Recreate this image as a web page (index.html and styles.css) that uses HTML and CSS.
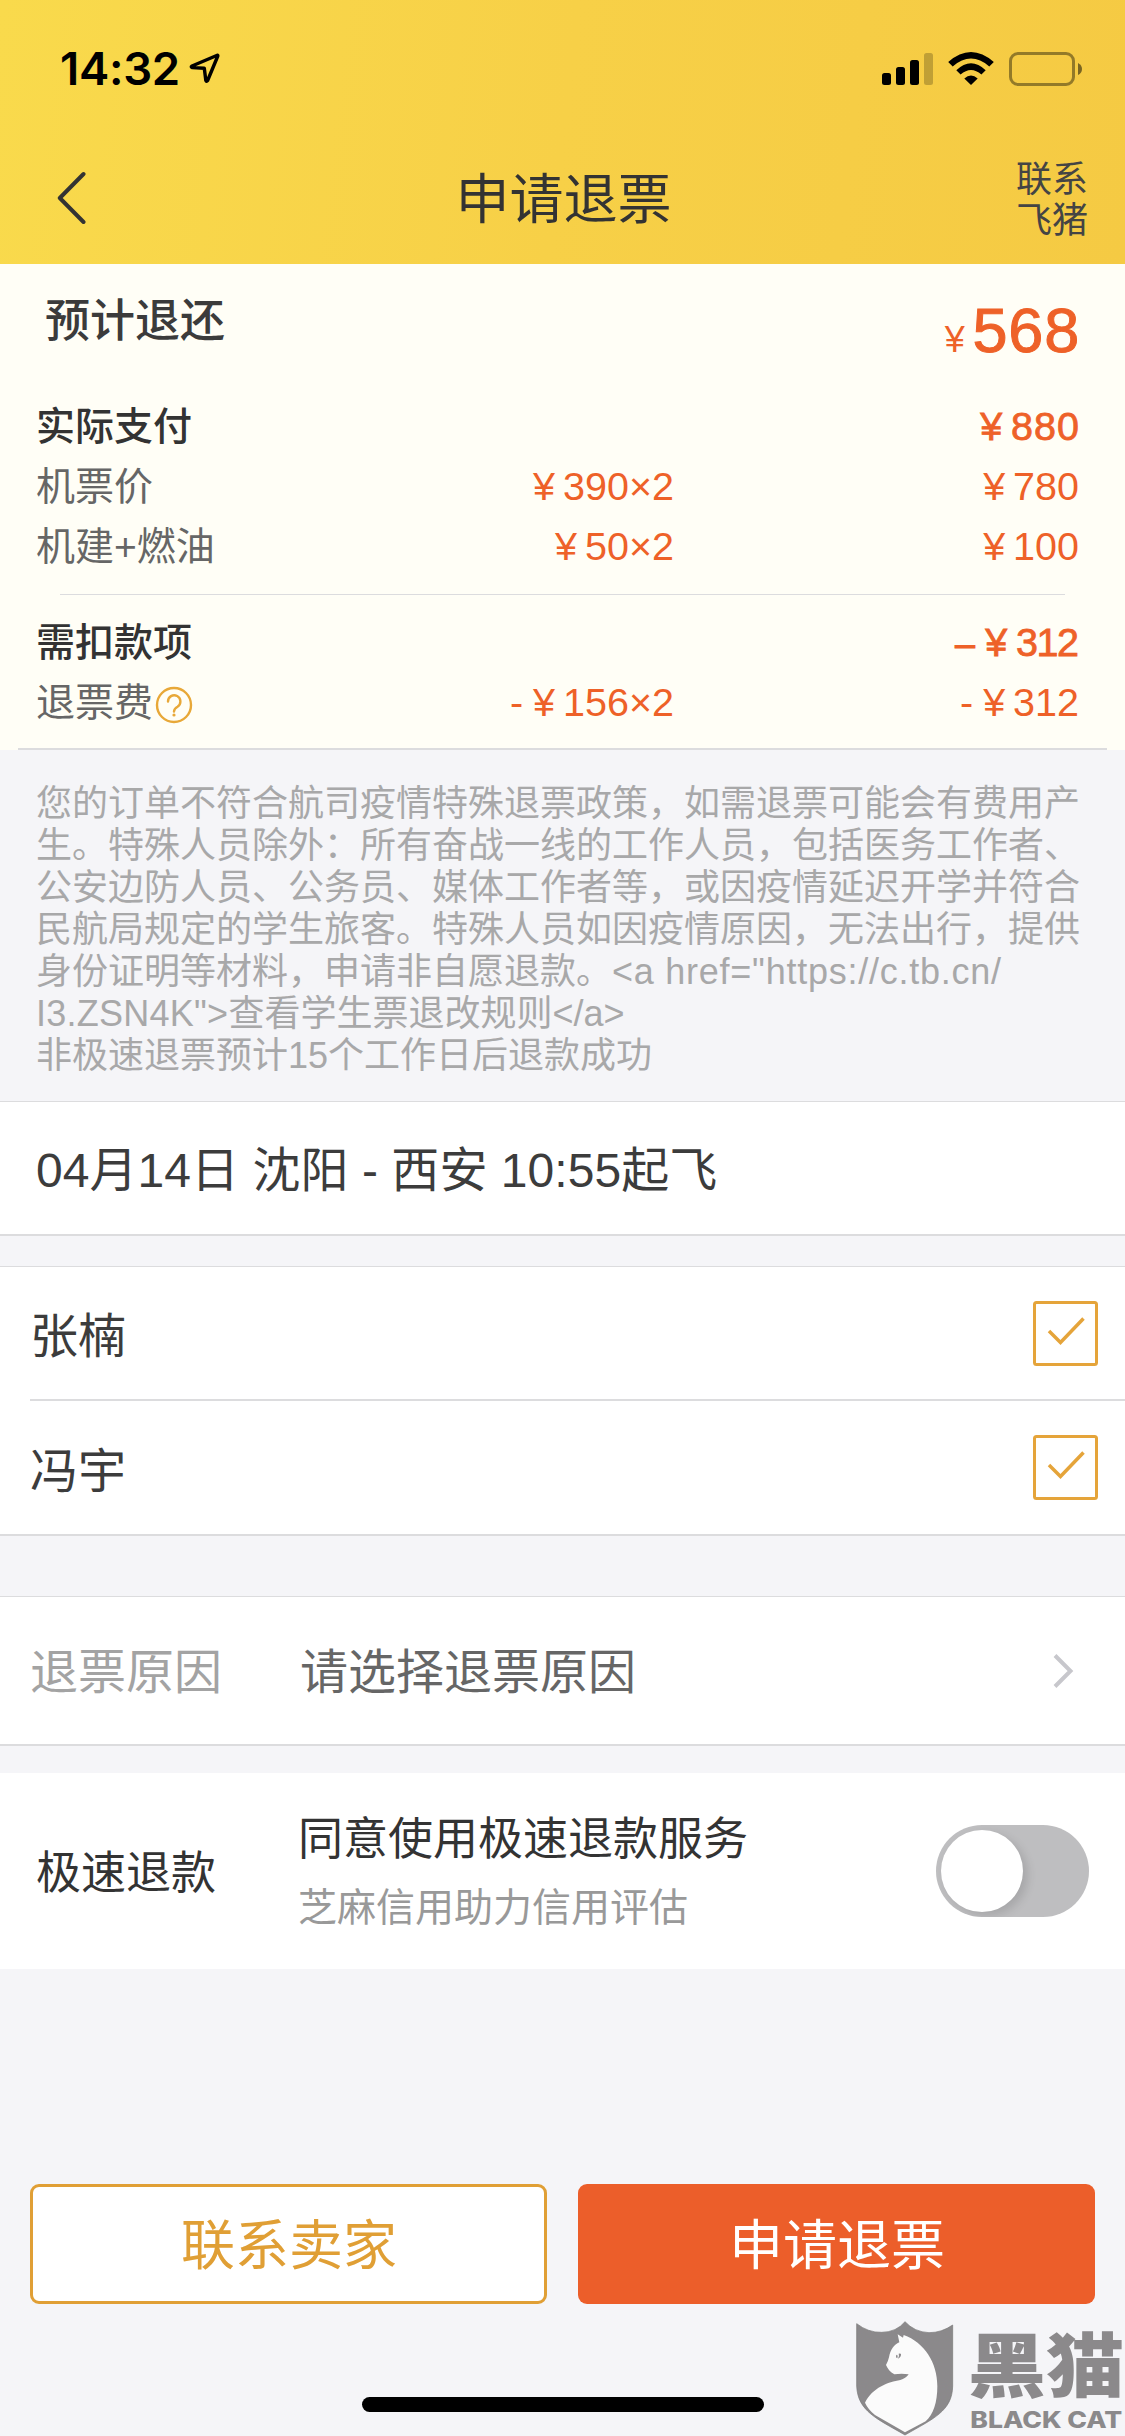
FILE: index.html
```html
<!DOCTYPE html>
<html lang="zh-CN">
<head>
<meta charset="utf-8">
<title>申请退票</title>
<link rel="stylesheet" href="styles.css">
</head>
<body>
<div class="screen">
  <header class="top">
    <div class="status">
      <span class="time">14:32</span>
      <svg class="loc" width="32" height="32" viewBox="0 0 32 32"><path d="M28.300 3.200 3 14q-1.600 1 .2 1.600L15.300 16.200 16.800 28.300q.7 1.800 1.800.2L28.800 4q.2-.9-.5-.8Z" fill="none" stroke="#000" stroke-width="3.400" stroke-linejoin="round"/></svg>
      <svg class="signals" width="202" height="36" viewBox="0 0 202 36">
        <rect x="1" y="22" width="9" height="12" rx="2.5"/><rect x="15" y="16" width="9" height="18" rx="2.5"/><rect x="29" y="9" width="9" height="25" rx="2.5"/><rect x="43" y="2" width="9" height="32" rx="2.5" opacity=".22"/>
        <path d="M90 34l-6.700-6.500q6.700-6 13.400 0ZM75.300 19.200q14.700-14 29.400 0l-4.300 4.300q-10.400-9-20.800 0ZM67.200 10.900q22.800-20 45.600 0l-4.500 4.500q-18.300-15.800-36.600 0Z"/>
        <rect x="129.500" y="2.500" width="63" height="31" rx="7.500" fill="none" stroke="#000" stroke-opacity=".4" stroke-width="3"/><path d="M197 12q4 2 4 6t-4 6Z" opacity=".5"/>
      </svg>
    </div>
    <nav class="nav">
      <svg class="back" width="30" height="56" viewBox="0 0 30 56"><path d="M26.500 4 2.800 28l23.700 24" fill="none" stroke="#333" stroke-width="4" stroke-linecap="round" stroke-linejoin="round"/></svg>
      <h1 class="title">申请退票</h1>
      <span class="contact">联系<br>飞猪</span>
    </nav>
  </header>

  <section class="fees">
    <div class="total"><span class="total-label">预计退还</span><span class="total-sum"><small class="yen">¥</small>568</span></div>
    <div class="row strong"><span class="label">实际支付</span><span></span><span class="sum"><i class="yen">¥</i><b class="wide">880</b></span></div>
    <div class="row"><span class="label">机票价</span><span class="sum"><i class="yen">¥</i>390×2</span><span class="sum"><i class="yen">¥</i>780</span></div>
    <div class="row"><span class="label">机建+燃油</span><span class="sum"><i class="yen">¥</i>50×2</span><span class="sum"><i class="yen">¥</i>100</span></div>
    <hr class="rule">
    <div class="row strong"><span class="label">需扣款项</span><span></span><span class="sum"><i class="sign">–</i><i class="yen">¥</i><b class="tight">312</b></span></div>
    <div class="row"><span class="label with-icon">退票费<svg class="help" width="38" height="38" viewBox="0 0 38 38" fill="none" stroke="#e8a838" stroke-width="2.400"><circle cx="19" cy="19" r="17"/><path d="M13 15.500a6.200 6.200 0 1 1 9.500 5.200q-3.500 2-3.500 4.800" stroke-linecap="round"/><circle cx="19" cy="29" r="1.600" fill="#e8a838" stroke="none"/></svg></span><span class="sum"><i class="sign">-</i><i class="yen">¥</i>156×2</span><span class="sum"><i class="sign">-</i><i class="yen">¥</i>312</span></div>
  </section>

  <p class="notice">您的订单不符合航司疫情特殊退票政策，如需退票可能会有费用产<br>生。特殊人员除外：所有奋战一线的工作人员，包括医务工作者、<br>公安边防人员、公务员、媒体工作者等，或因疫情延迟开学并符合<br>民航局规定的学生旅客。特殊人员如因疫情原因，无法出行，提供<br>身份证明等材料，申请非自愿退款。<span class="markup">&lt;a href="https://c.tb.cn/</span><br><span class="markup-end">I3.ZSN4K"&gt;</span>查看学生票退改规则&lt;/a&gt;<br>非极速退票预计15个工作日后退款成功</p>

  <section class="card flight">04月14日 沈阳 - 西安 10:55起飞</section>

  <section class="card people">
    <div class="person"><span>张楠</span><svg class="check" width="65" height="65" viewBox="0 0 65 65" fill="none" stroke="#e5a43a" stroke-width="3"><rect x="1.500" y="1.500" width="62" height="62" rx="2"/><path d="M16 30 27.500 41.500 50.500 17.500" stroke-width="3.500"/></svg></div>
    <div class="person"><span>冯宇</span><svg class="check" width="65" height="65" viewBox="0 0 65 65" fill="none" stroke="#e5a43a" stroke-width="3"><rect x="1.500" y="1.500" width="62" height="62" rx="2"/><path d="M16 30 27.500 41.500 50.500 17.500" stroke-width="3.500"/></svg></div>
  </section>

  <section class="card reason">
    <span class="reason-label">退票原因</span><span class="reason-value">请选择退票原因</span>
    <svg class="chevron" width="22" height="36" viewBox="0 0 22 36"><path d="M3 2.500 18.500 18 3 33.500" fill="none" stroke="#c7c7cc" stroke-width="4"/></svg>
  </section>

  <section class="fast">
    <span class="fast-label">极速退款</span>
    <div class="fast-text"><span>同意使用极速退款服务</span><span class="hint">芝麻信用助力信用评估</span></div>
    <span class="toggle"><span class="knob"></span></span>
  </section>

  <footer class="actions">
    <span class="btn outline">联系卖家</span>
    <span class="btn solid">申请退票</span>
  </footer>
  <div class="home"></div>

  <svg class="watermark" width="300" height="140" viewBox="0 0 900 420">
    <path fill="#8b898b" stroke="#777" stroke-width="2" d="M95 83Q130 110 170 109Q215 108 240 77Q268 108 312 110Q350 110 383 87V270C382 345 325 368 240 417C155 368 98 345 95 270Z"/>
    <path fill="#fbfbfb" d="M218 115 234 125 236 117C298 139 337 200 337 270C337 320 325 355 302 376L240 409 150 357Q129 340 120 320C142 275 190 258 226 252Q242 248 251 235Q230 231 208 235C196 229 187 217 183 207Q190 194 192 184C196 161 207 146 223 139Z"/>
    <path fill="#8b898b" d="M213 179q4-6 5 2l-1 6q-5-2-4-8ZM221 173q10-3 6 8-3 6-8 7 5-8 2-15Z"/>
    <text class="mark-cn" x="428" y="288" textLength="470" lengthAdjust="spacingAndGlyphs">黑猫</text>
    <text class="mark-en" x="436" y="397" textLength="456" lengthAdjust="spacingAndGlyphs">BLACK CAT</text>
  </svg>
</div>
</body>
</html>
```
FILE: styles.css
```css
* { box-sizing: border-box; margin: 0; padding: 0; }
body { background: #f5f5f8; color: #333; font-family: "Liberation Sans", "Noto Sans CJK SC", sans-serif; }
i { font-style: normal; }
b { font-weight: inherit; }
.screen { position: relative; width: 1125px; height: 2436px; overflow: hidden; background: #f5f5f8; display: flex; flex-direction: column; }

.top { height: 264px; flex: none; background: linear-gradient(97deg, #f9da4c, #f7d047 50%, #f5ca43); }
.status { height: 132px; padding: 0 42px 0 60px; display: flex; align-items: flex-start; }
.time { margin-top: 42px; font: 600 45.500px/54px Inter, sans-serif; letter-spacing: -.3px; width: 129px; color: #000; }
.loc { margin-top: 52px; }
.signals { margin: 51px 0 0 auto; }
.nav { height: 132px; padding: 0 37px 0 57px; display: grid; grid-template-columns: 200px 1fr 200px; align-items: center; }
.title { font-size: 54px; font-weight: 400; line-height: 80px; text-align: center; padding: 4px 18px 0 0; }
.contact { justify-self: end; font-size: 36px; line-height: 41px; padding-top: 3px; color: #444; }

.fees { height: 486px; flex: none; background: linear-gradient(#dcdcde, #dcdcde) 18px 100% / 1089px 2px no-repeat #fffef6; padding: 0 46px 0 36px; display: flex; flex-direction: column; }
.total { height: 132px; display: flex; justify-content: space-between; padding-left: 9px; }
.total-label { font-size: 45px; font-weight: 500; line-height: 60px; margin-top: 28px; color: #3b3b3b; }
.total-sum { font-size: 63px; line-height: 72px; margin: 30px -1px 0 0; letter-spacing: .8px; color: #ee6128; -webkit-text-stroke: 1px; }
.total-sum .yen { font-size: 36px; margin-right: 7px; -webkit-text-stroke: 0; }
.row { height: 60px; display: grid; grid-template-columns: 320px 318px 1fr; font-size: 39px; line-height: 60px; color: #666; }
.row.strong { font-weight: 500; color: #333; }
.label { line-height: 62px; }
.sum { text-align: right; font-size: 39.500px; font-weight: 400; color: #ee6128; }
.sum .yen { margin-right: 8px; }
.sign { margin-right: 10px; }
.strong .sum { -webkit-text-stroke: .8px; }
.strong .yen { margin-right: 9px; }
.strong .sign { font-size: 36px; }
.wide { letter-spacing: 1px; margin-right: -1px; }
.tight { letter-spacing: -1.500px; margin-right: 1.500px; }
.rule { border: 0; height: 1px; flex: none; margin: 18px 14px 17px 24px; background: #dcdcde; }
.with-icon { display: flex; align-items: center; }
.help { margin: 3px 0 0 2px; }

.notice { height: 351px; flex: none; padding: 33px 0 0 36px; font-size: 36px; line-height: 42px; color: #a8a8a9; white-space: nowrap; }
.markup { letter-spacing: .75px; }
.markup-end { letter-spacing: .25px; }

.card { flex: none; background: #fff; border-top: 1px solid #dcdcde; border-bottom: 2px solid #dcdcde; font-size: 48px; }
.flight { height: 135px; padding-left: 36px; line-height: 138px; color: #3c3c3c; letter-spacing: .05px; }
.people { height: 270px; margin-top: 30px; color: #3c3c3c; }
.person { height: 132px; padding: 0 27px 0 30px; display: flex; justify-content: space-between; align-items: center; line-height: 124px; }
.person span { padding-top: 8px; }
.person + .person { height: 135px; border-top: 2px solid #dcdcde; margin-left: 30px; padding-left: 0; }
.reason { height: 150px; margin-top: 60px; padding: 0 51px 0 30px; display: grid; grid-template-columns: 270px 1fr 22px; align-items: center; line-height: 143px; }
.reason span { padding-top: 4px; }
.reason-label { color: #a3a3a3; }
.reason-value { color: #666; }

.fast { flex: none; height: 196px; margin-top: 27px; padding: 0 36px; background: #fff; display: grid; grid-template-columns: 262px 1fr 153px; align-items: center; font-size: 45px; color: #333; }
.fast-label { padding-bottom: 3px; }
.fast-text { display: flex; flex-direction: column; line-height: 68px; padding-top: 5px; }
.hint { font-size: 39px; color: #999; }
.toggle { width: 153px; height: 92px; border-radius: 46px; background: #bebec0; padding: 5px; overflow: hidden; }
.knob { display: block; width: 82px; height: 82px; border-radius: 50%; background: #fff; box-shadow: 5px 4px 10px rgba(0,0,0,.12); }

.actions { flex: none; margin-top: 215px; padding: 0 30px; display: grid; grid-template-columns: 1fr 1fr; gap: 31px; }
.btn { height: 120px; border-radius: 9px; text-align: center; font-size: 54px; line-height: 124px; padding-left: 1px; }
.outline { border: 3px solid #e09f35; background: #fff; color: #e09f35; line-height: 118px; }
.solid { background: #ec5e2a; color: #fff; }
.home { flex: none; width: 402px; height: 15px; margin: 93px 0 0 362px; border-radius: 8px; background: #000; }
.watermark { position: absolute; left: 825px; top: 2296px; }
.mark-cn { font: 900 212px "Noto Sans CJK SC", sans-serif; fill: #8b898b; }
.mark-en { font: 800 67px Inter, sans-serif; fill: #8b898b; }
```
